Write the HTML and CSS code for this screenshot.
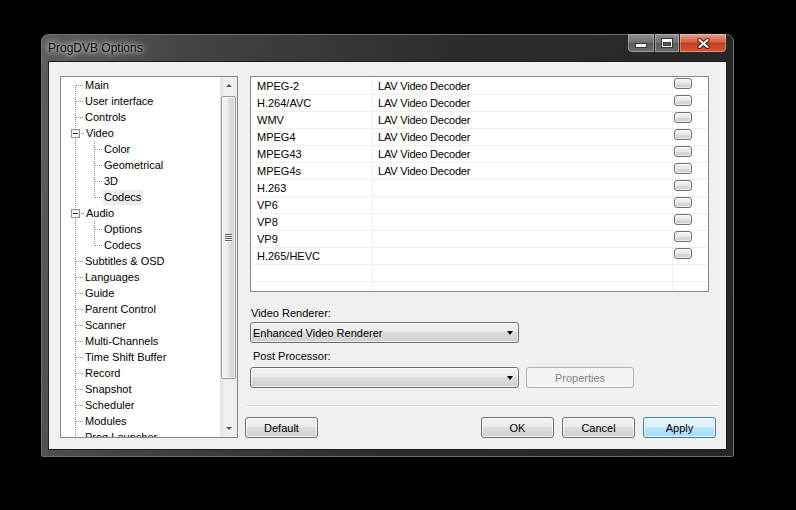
FILE: index.html
```html
<!DOCTYPE html>
<html lang="en">
<head>
  <meta charset="UTF-8" />
  <title>ProgDVB Options</title>
  <link rel="stylesheet" href="styles.css">
</head>
<body>

<div class="window">
  <div class="titlebar">
    <span class="title">ProgDVB Options</span>
    <div class="caption-btns">
      <span class="cap min"><i></i></span>
      <span class="cap max"><i></i></span>
      <span class="cap close">
        <svg width="13" height="11" viewBox="0 0 13 11">
          <path d="M2.5 2 L10.5 9 M10.5 2 L2.5 9" stroke="#3b1710" stroke-width="4.2" stroke-linecap="round"/>
          <path d="M2.5 2 L10.5 9 M10.5 2 L2.5 9" stroke="#fff" stroke-width="2.2" stroke-linecap="round"/>
        </svg>
      </span>
    </div>
  </div>

  <div class="client">
    <!-- settings tree -->
    <div class="tree">
      <div class="tree-items">
        <div class="node"><i class="stub"></i><span class="label">Main</span></div>
        <div class="node"><i class="stub"></i><span class="label">User interface</span></div>
        <div class="node"><i class="stub"></i><span class="label">Controls</span></div>
        <div class="node open"><i class="expander"></i><i class="stub short"></i><span class="label">Video</span></div>
        <div class="children">
          <div class="node child"><i class="stub"></i><span class="label">Color</span></div>
          <div class="node child"><i class="stub"></i><span class="label">Geometrical</span></div>
          <div class="node child"><i class="stub"></i><span class="label">3D</span></div>
          <div class="node child"><i class="stub"></i><span class="label selected">Codecs</span></div>
        </div>
        <div class="node open"><i class="expander"></i><i class="stub short"></i><span class="label">Audio</span></div>
        <div class="children">
          <div class="node child"><i class="stub"></i><span class="label">Options</span></div>
          <div class="node child"><i class="stub"></i><span class="label">Codecs</span></div>
        </div>
        <div class="node"><i class="stub"></i><span class="label">Subtitles &amp; OSD</span></div>
        <div class="node"><i class="stub"></i><span class="label">Languages</span></div>
        <div class="node"><i class="stub"></i><span class="label">Guide</span></div>
        <div class="node"><i class="stub"></i><span class="label">Parent Control</span></div>
        <div class="node"><i class="stub"></i><span class="label">Scanner</span></div>
        <div class="node"><i class="stub"></i><span class="label">Multi-Channels</span></div>
        <div class="node"><i class="stub"></i><span class="label">Time Shift Buffer</span></div>
        <div class="node"><i class="stub"></i><span class="label">Record</span></div>
        <div class="node"><i class="stub"></i><span class="label">Snapshot</span></div>
        <div class="node"><i class="stub"></i><span class="label">Scheduler</span></div>
        <div class="node"><i class="stub"></i><span class="label">Modules</span></div>
        <div class="node"><i class="stub"></i><span class="label">Prog Launcher</span></div>
      </div>
      <div class="vscroll">
        <div class="arrow-btn up"></div>
        <div class="thumb"><i class="grip"></i></div>
        <div class="track"></div>
        <div class="arrow-btn down"></div>
      </div>
    </div>

    <div class="panel">
      <div class="codec-list">
        <div class="codec-row"><span class="c-name">MPEG-2</span><span class="c-dec">LAV Video Decoder</span><span class="c-btn"><i class="mini-btn"></i></span></div>
        <div class="codec-row"><span class="c-name">H.264/AVC</span><span class="c-dec">LAV Video Decoder</span><span class="c-btn"><i class="mini-btn"></i></span></div>
        <div class="codec-row"><span class="c-name">WMV</span><span class="c-dec">LAV Video Decoder</span><span class="c-btn"><i class="mini-btn"></i></span></div>
        <div class="codec-row"><span class="c-name">MPEG4</span><span class="c-dec">LAV Video Decoder</span><span class="c-btn"><i class="mini-btn"></i></span></div>
        <div class="codec-row"><span class="c-name">MPEG43</span><span class="c-dec">LAV Video Decoder</span><span class="c-btn"><i class="mini-btn"></i></span></div>
        <div class="codec-row"><span class="c-name">MPEG4s</span><span class="c-dec">LAV Video Decoder</span><span class="c-btn"><i class="mini-btn"></i></span></div>
        <div class="codec-row"><span class="c-name">H.263</span><span class="c-dec"></span><span class="c-btn"><i class="mini-btn"></i></span></div>
        <div class="codec-row"><span class="c-name">VP6</span><span class="c-dec"></span><span class="c-btn"><i class="mini-btn"></i></span></div>
        <div class="codec-row"><span class="c-name">VP8</span><span class="c-dec"></span><span class="c-btn"><i class="mini-btn"></i></span></div>
        <div class="codec-row"><span class="c-name">VP9</span><span class="c-dec"></span><span class="c-btn"><i class="mini-btn"></i></span></div>
        <div class="codec-row"><span class="c-name">H.265/HEVC</span><span class="c-dec"></span><span class="c-btn"><i class="mini-btn"></i></span></div>
        <div class="codec-row"><span class="c-name"></span><span class="c-dec"></span><span class="c-btn"></span></div>
        <div class="codec-row"><span class="c-name"></span><span class="c-dec"></span><span class="c-btn"></span></div>
      </div>

      <div class="field-label">Video Renderer:</div>
      <div class="combo">Enhanced Video Renderer</div>

      <div class="field-label second">Post Processor:</div>
      <div class="combo-row">
        <div class="combo"></div>
        <button class="btn props" disabled>Properties</button>
      </div>

      <div class="separator"></div>

      <div class="dialog-buttons">
        <button class="btn">Default</button>
        <span class="spacer"></span>
        <button class="btn">OK</button>
        <button class="btn">Cancel</button>
        <button class="btn default">Apply</button>
      </div>
    </div>
  </div>
</div>

</body>
</html>
```

FILE: styles.css
```css
* {
  box-sizing: border-box;
}

body {
  margin: 0;
  width: 796px;
  height: 510px;
  overflow: hidden;
  background: #000;
  font-family: "Liberation Sans", Arial, sans-serif;
  font-size: 11px;
  color: #000;
}

/* window frame */
.window {
  margin: 34px 0 0 41px;
  width: 693px;
  height: 423px;
  padding: 0 7px 7px;
  display: flex;
  flex-direction: column;
  border: 1px solid #707070;
  border-radius: 7px 7px 2px 2px;
  background: linear-gradient(100deg, #5e5e5e 0%, #434343 20%, #2c2c2c 55%, #262626 100%);
}

.titlebar {
  height: 27px;
  display: flex;
  justify-content: space-between;
  align-items: flex-start;
}

.title {
  margin: 6px 0 0 -1px;
  font-size: 12px;
  line-height: 15px;
  color: #0a0a0a;
  text-shadow: 0 0 6px rgba(220,220,220,0.9), 0 0 10px rgba(200,200,200,0.7), 0 0 3px rgba(255,255,255,0.6);
}

.caption-btns {
  display: flex;
  margin: -1px -1px 0 0;
}

.cap {
  height: 19px;
  display: flex;
  align-items: center;
  justify-content: center;
  border: 1px solid #2a2a2a;
  border-top: none;
  box-shadow: inset 0 0 0 1px rgba(255,255,255,0.3);
  background: linear-gradient(#8e8e8e, #737373 45%, #5b5b5b 50%, #6e6e6e);
}

.cap.min {
  width: 27px;
  border-radius: 0 0 0 5px;
  border-right: none;
}

.cap.max {
  width: 26px;
}

.cap.close {
  width: 47px;
  border-left: none;
  border-radius: 0 0 5px 0;
  background: linear-gradient(#e4a28c, #d0603f 45%, #c23b1d 50%, #d55a35);
}

.cap.min i {
  display: block;
  width: 10px;
  height: 3px;
  margin-top: 5px;
  background: #fff;
  box-shadow: 0 0 0 1px #333;
}

.cap.max i {
  display: block;
  width: 10px;
  height: 8px;
  border: 1px solid #fff;
  border-top-width: 3px;
  box-shadow: 0 0 0 1px #333, inset 0 0 0 1px #333;
}

/* client area */
.client {
  flex: 1;
  display: flex;
  gap: 7px;
  padding: 14px 0 0 11px;
  background: #f0f0f0;
  box-shadow: 0 0 0 1px #1e1e1e;
}

/* tree view */
.tree {
  width: 178px;
  height: 362px;
  display: flex;
  overflow: hidden;
  border: 1px solid #828790;
  background: #fff;
}

.tree-items {
  flex: 1;
  overflow: hidden;
  background-image: repeating-linear-gradient(to bottom, #8e8e8e 0 1px, transparent 1px 2px);
  background-position: 14px 8px;
  background-size: 1px 100%;
  background-repeat: no-repeat;
}

.children {
  background-image: repeating-linear-gradient(to bottom, #8e8e8e 0 1px, transparent 1px 2px);
  background-position: 33px 0;
  background-size: 1px calc(100% - 8px);
  background-repeat: no-repeat;
}

.node {
  height: 16px;
  display: flex;
  align-items: center;
  padding-left: 15px;
  white-space: nowrap;
}

.node.open {
  padding-left: 10px;
}

.node.child {
  padding-left: 34px;
}

.stub {
  display: block;
  width: 8px;
  height: 1px;
  background: repeating-linear-gradient(to right, #8e8e8e 0 1px, transparent 1px 2px);
}

.stub.short {
  width: 4px;
  margin-left: 1px;
}

.expander {
  width: 9px;
  height: 9px;
  display: flex;
  align-items: center;
  justify-content: center;
  border: 1px solid #919191;
  background: linear-gradient(135deg, #fff 40%, #e4e4e4);
}

.expander::after {
  content: '';
  width: 5px;
  height: 1px;
  background: #222;
}

.label {
  height: 15px;
  line-height: 15px;
  padding: 0 2px 0 1px;
}

.label.selected {
  background: #ececec;
}

/* tree scrollbar */
.vscroll {
  width: 17px;
  display: flex;
  flex-direction: column;
  background: linear-gradient(to right, #e2e2e2, #f0f0f0 35%, #ececec);
}

.arrow-btn {
  height: 17px;
  display: flex;
  align-items: center;
  justify-content: center;
}

.arrow-btn::after {
  content: '';
  border-left: 3px solid transparent;
  border-right: 3px solid transparent;
}

.arrow-btn.up::after {
  border-bottom: 3px solid #5a5a5a;
}

.arrow-btn.down::after {
  border-top: 3px solid #5a5a5a;
}

.thumb {
  height: 283px;
  margin: 2px 1px 0;
  display: flex;
  align-items: center;
  justify-content: center;
  border: 1px solid #979797;
  border-radius: 2px;
  background: linear-gradient(to right, #f4f4f4, #ebebeb 45%, #dcdcdc 55%, #d2d2d2);
  box-shadow: inset 0 0 0 1px rgba(255,255,255,0.7);
}

.grip {
  display: block;
  width: 7px;
  height: 8px;
  background: repeating-linear-gradient(to bottom, #636363 0 1px, #fafafa 1px 2px);
}

.track {
  flex: 1;
}

/* right panel */
.panel {
  width: 473px;
  display: flex;
  flex-direction: column;
}

.codec-list {
  margin-left: 5px;
  width: 459px;
  height: 216px;
  padding-top: 1px;
  overflow: hidden;
  border: 1px solid #828790;
  background: #fff;
}

.codec-row {
  height: 17px;
  display: grid;
  grid-template-columns: 122px 300px 1fr;
  border-bottom: 1px solid #f0f0f0;
}

.codec-row span {
  line-height: 16px;
  white-space: nowrap;
  overflow: hidden;
  border-right: 1px solid #f0f0f0;
}

.codec-row .c-name {
  padding-left: 6px;
}

.codec-row .c-dec {
  padding-left: 5px;
  letter-spacing: -0.2px;
}

.codec-row .c-btn {
  padding-left: 1px;
  border-right: none;
}

.mini-btn {
  display: block;
  width: 18px;
  height: 11px;
  border: 1px solid #707070;
  border-radius: 3px;
  background: linear-gradient(#f4f4f4, #e8e8e8 50%, #d9d9d9 51%, #d0d0d0);
  box-shadow: inset 0 0 0 1px rgba(255,255,255,0.6);
}

.field-label {
  margin: 15px 0 0 6px;
  line-height: 13px;
}

.field-label.second {
  margin: 7px 0 0 8px;
}

.combo {
  margin: 2px 0 0 5px;
  width: 269px;
  height: 21px;
  display: flex;
  align-items: center;
  justify-content: space-between;
  padding: 0 5px 0 2px;
  border: 1px solid #707070;
  border-radius: 3px;
  background: linear-gradient(#f2f2f2, #ebebeb 49%, #dddddd 50%, #cfcfcf);
  box-shadow: inset 0 0 0 1px rgba(255,255,255,0.6);
}

.combo::after {
  content: '';
  margin-left: auto;
  border-left: 3.5px solid transparent;
  border-right: 3.5px solid transparent;
  border-top: 4px solid #000;
}

.combo-row {
  display: flex;
  margin-top: 4px;
}

.combo-row .combo {
  margin-top: 0;
}

.btn {
  width: 73px;
  height: 21px;
  padding: 0;
  font: inherit;
  color: #000;
  border: 1px solid #707070;
  border-radius: 3px;
  background: linear-gradient(#f2f2f2, #ebebeb 49%, #dddddd 50%, #cfcfcf);
  box-shadow: inset 0 0 0 1px rgba(255,255,255,0.7);
}

.btn.default {
  border-color: #3c7fb1;
  background: linear-gradient(#eaf6fd, #d9f0fc 49%, #bee6fd 50%, #a7d9f5);
}

.btn:disabled {
  color: #838383;
  border-color: #adb2b5;
  background: #f4f4f4;
  box-shadow: none;
}

.btn.props {
  width: 108px;
  margin-left: 7px;
}

.separator {
  margin: 17px 0 0 2px;
  width: 471px;
  height: 2px;
  border-top: 1px solid #d5d5d5;
  border-bottom: 1px solid #fff;
}

.dialog-buttons {
  display: flex;
  margin: 10px 2px 0 0;
  gap: 8px;
}

.dialog-buttons .spacer {
  flex: 1;
}
```
